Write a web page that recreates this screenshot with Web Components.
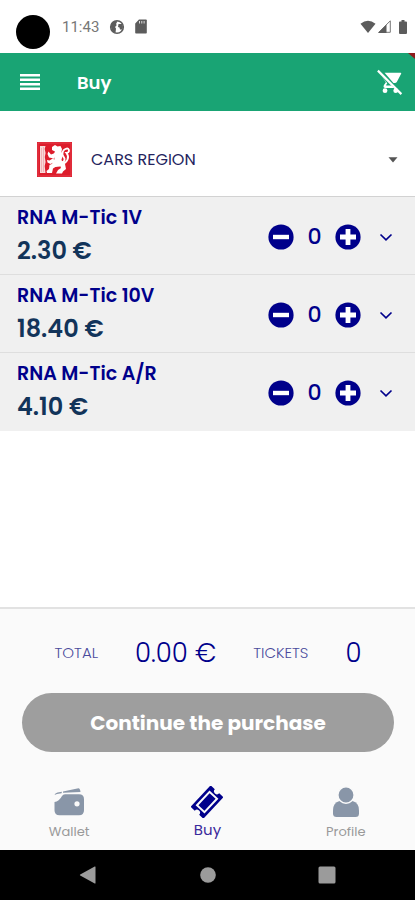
<!DOCTYPE html>
<html lang="en">
<head>
<meta charset="utf-8">
<meta name="viewport" content="width=device-width, initial-scale=1">
<title>Buy</title>
<style>
    :root {
        --brand: #19a474;
        --navy: #00008b;
        --ink: #12345a;
        --muted: #8996a8;
        --line: #dedede;
    }
    body {
        margin: 0;
        font-family: Poppins, Inter, "Open Sans", sans-serif;
        background: #fff;
    }
</style>
</head>
<body>
<buy-screen></buy-screen>

<script>
class StatusBar extends HTMLElement {
    constructor() {
        super();
        this.attachShadow({ mode: 'open' });
    }

    connectedCallback() {
        this.shadowRoot.innerHTML = `
        <style>
            :host {
                display: flex;
                align-items: center;
                gap: 12px;
                height: 53px;
                padding: 0 8px 0 16px;
                box-sizing: border-box;
                background: #fff;
                color: #777;
                font: 15px/20px Roboto, sans-serif;
            }
            .camera {
                width: 34px;
                height: 34px;
                margin-top: 11px;
                border-radius: 50%;
                background: #000;
            }
            .left { display: flex; align-items: center; gap: 10px; flex: 1; }
            .right { display: flex; align-items: center; gap: 2px; }
            .battery { margin-left: 6px; }
            svg { display: block; fill: #5c5c5c; }
        </style>
        <span class="camera"></span>
        <div class="left">
            <time>11:43</time>
            <svg width="16" height="16" viewBox="0 0 16 16">
                <circle cx="8" cy="8" r="6.3" fill="none" stroke="#5c5c5c" stroke-width="1.6"/>
                <path d="M2 8Q1.500 3.500 6 2l2.500.2-1.300 2.300.3 2-1.500 1.500L7 9.500 6.500 14 3.500 12.500z"/>
                <path d="M9.500 5h3.500l1 3-.8 2.500h-2.200L10.500 8.500 9 8z"/>
            </svg>
            <svg width="12" height="15" viewBox="0 0 12 15">
                <path d="M4 .5h7q.8 0 .8.8v12.400q0 .8-.8.8H1q-.8 0-.8-.8V4.500z"/>
                <path d="M4.500 2v2.500M6.800 2v2.500M9.100 2v2.500" stroke="#ddd" stroke-width="1"/>
            </svg>
        </div>
        <div class="right">
            <svg width="16" height="13" viewBox="0 0 16 13">
                <path d="M8 13L.5 3.800Q8-2.500 15.500 3.800z"/>
            </svg>
            <svg width="13" height="13" viewBox="0 0 13 13">
                <path d="M12.300.8v11.500H.8z" fill="#fff" stroke="#777" stroke-width="1"/>
                <path d="M8.500 4.500V13H0z"/>
            </svg>
            <svg class="battery" width="8" height="14" viewBox="0 0 8 14">
                <path d="M2.500 0h3v1.500H7q1 0 1 1V13q0 1-1 1H1q-1 0-1-1V2.500q0-1 1-1h1.500z"/>
            </svg>
        </div>
        `;
    }
}

class AppHeader extends HTMLElement {
    constructor() {
        super();
        this.attachShadow({ mode: 'open' });
    }

    connectedCallback() {
        this.shadowRoot.innerHTML = `
        <style>
            :host {
                display: flex;
                align-items: center;
                position: relative;
                overflow: hidden;
                height: 58px;
                padding: 0 12px 0 20px;
                background: var(--brand);
                color: #fff;
            }
            h1 {
                flex: 1;
                margin: 0 0 0 37px;
                padding-top: 2px;
                font-size: 18px;
                line-height: 24px;
                font-weight: 600;
            }
            button {
                padding: 0;
                border: 0;
                background: none;
                color: inherit;
                cursor: pointer;
            }
            svg { display: block; fill: currentColor; }
            /* debug ribbon peeking in at the corner */
            .ribbon {
                position: absolute;
                top: 0;
                right: 0;
                width: 7px;
                height: 6px;
                background: #8e1c1c;
                clip-path: polygon(0 0, 100% 0, 100% 100%);
            }
        </style>
        <button aria-label="Menu">
            <svg width="20" height="16" viewBox="0 0 20 16"><path d="M0 0h20v2.600H0zM0 4.400h20V7H0zM0 9h20v2.600H0zM0 13.400h20V16H0z"/></svg>
        </button>
        <h1><slot></slot></h1>
        <button aria-label="Empty cart">
            <svg width="26" height="26" viewBox="0 0 24 24">
                <path d="M7 3.400h14.700q1 0 .6 1l-3.900 7.400q-.6 1.200-2 1.200h-1.200zM4.700 7.200l3.500 5-1.900 2.900q-.9 2.400 1.400 2.400h8l-2.300-2.300H8.600l-.2-.5 1.100-1.500z"/>
                <circle cx="7.400" cy="20" r="2.200"/>
                <circle cx="17.300" cy="20" r="2.200"/>
                <path d="M.8 1.500l21.700 21.700" stroke="currentColor" stroke-width="2"/>
            </svg>
        </button>
        <span class="ribbon"></span>
        `;
    }
}

class NetworkPicker extends HTMLElement {
    constructor() {
        super();
        this.attachShadow({ mode: 'open' });
    }

    connectedCallback() {
        this.shadowRoot.innerHTML = `
        <style>
            :host {
                display: flex;
                align-items: center;
                gap: 19px;
                height: 86px;
                padding: 12px 16px 0 37px;
                box-sizing: border-box;
                border-bottom: 1px solid #d2d2d2;
            }
            svg { display: block; flex: none; }
            .field { display: grid; flex: 1; align-items: center; }
            .field > * { grid-area: 1 / 1; }
            select {
                appearance: none;
                width: 100%;
                height: 48px;
                padding: 0;
                border: 0;
                background: none;
                color: #24245e;
                font: 400 16px/24px Poppins, Inter, sans-serif;
            }
            .arrow { justify-self: end; pointer-events: none; }
        </style>
        <svg width="35" height="35" viewBox="0 0 35 35">
            <rect width="35" height="35" fill="#dd1c2b"/>
            <rect x="1" y="1" width="33" height="33" fill="none" stroke="#e85560" stroke-width=".6"/>
            <path d="M3 4h5.500l-.8 3 .9 4-.8 4 .8 5-.9 4 .8 7H3z" fill="#f8dada"/>
            <path d="M4.500 6v24M6.500 5v25" stroke="#eb8b92" stroke-width=".5"/>
            <g fill="#fff">
                <path d="M15 5l3-2 2.500 1.500 3-.5 1.500 3-.5 3 1.500 3-1.500 4.500 1 3.500-2.500 3.500-5 .5-3-3 2.500-5-1-4.500 1.500-3-3-1.500z"/>
                <path d="M18 11l-4 1.500-2.500-3-1 2.500 1.500 3.500 5 1zM16.500 16l-4 2.500-2.500-.5.5 2.500 3 1.500 4-2z"/>
                <path d="M17 21l-4.500 2-.5 4-2.500 2 .5 2h5l1-4.500 4-2.500zM20 21l3 2.500 1 2.500-3 2-2 3.500h6l1-2 3-2.500-1-5-3-3z"/>
            </g>
            <path d="M23.500 20.500q4.500 0 4-4l-2-3.500q-.5-4.500 3-6t3.500 2q-.5 2-2.500 2 2.500 3 1 6.500t-4 4" fill="none" stroke="#fff" stroke-width="1.900"/>
        </svg>
        <div class="field">
            <select aria-label="Network"><option>CARS REGION</option></select>
            <svg class="arrow" width="12" height="6" viewBox="0 0 12 6"><path d="M1.500.3h9L6 5.500z" fill="#555"/></svg>
        </div>
        `;
    }
}

class TicketRow extends HTMLElement {
    constructor() {
        super();
        this.attachShadow({ mode: 'open' });
        this.quantity = 0;
    }

    get price() {
        return Number(this.getAttribute('price'));
    }

    connectedCallback() {
        this.render();
        this.output = this.shadowRoot.querySelector('output');
        this.shadowRoot.querySelector('.minus').addEventListener('click', () => this.change(-1));
        this.shadowRoot.querySelector('.plus').addEventListener('click', () => this.change(1));
    }

    change(step) {
        this.quantity = Math.max(0, this.quantity + step);
        this.output.textContent = this.quantity;
        this.dispatchEvent(new CustomEvent('quantity-change', { bubbles: true }));
    }

    render() {
        this.shadowRoot.innerHTML = `
        <style>
            :host {
                display: flex;
                align-items: center;
                justify-content: space-between;
                height: 78px;
                padding: 2px 21px 0 17px;
                box-sizing: border-box;
                border-bottom: 1px solid var(--line);
                background: #f0f0f0;
                color: var(--navy);
            }
            :host(:last-of-type) { border-bottom-color: #f0f0f0; }
            h2, p { margin: 0; font-weight: 600; }
            h2 { font-size: 19px; line-height: 28px; }
            p { font-size: 24px; line-height: 38px; color: var(--ink); }
            .controls { display: flex; align-items: center; }
            button {
                padding: 0;
                border: 0;
                background: none;
                color: inherit;
                cursor: pointer;
            }
            output {
                width: 41px;
                text-align: center;
                font-size: 22px;
                line-height: 28px;
                font-weight: 500;
            }
            .details { margin-left: 17px; }
            svg { display: block; }
        </style>
        <div>
            <h2><slot></slot></h2>
            <p>${this.price.toFixed(2)} €</p>
        </div>
        <div class="controls">
            <button class="minus" aria-label="Remove one">
                <svg width="26" height="26" viewBox="0 0 26 26"><circle cx="13" cy="13" r="12.600" fill="currentColor"/><path d="M5 13h16" stroke="#fff" stroke-width="4.400"/></svg>
            </button>
            <output>0</output>
            <button class="plus" aria-label="Add one">
                <svg width="26" height="26" viewBox="0 0 26 26"><circle cx="13" cy="13" r="12.600" fill="currentColor"/><path d="M5 13h16M13 5v16" stroke="#fff" stroke-width="4.800"/></svg>
            </button>
            <button class="details" aria-label="Details">
                <svg width="16" height="16" viewBox="0 0 16 16"><path d="M2.500 5.500L8 10.800l5.500-5.300" fill="none" stroke="currentColor" stroke-width="1.700"/></svg>
            </button>
        </div>
        `;
    }
}

class CartSummary extends HTMLElement {
    constructor() {
        super();
        this.attachShadow({ mode: 'open' });
    }

    connectedCallback() {
        this.shadowRoot.innerHTML = `
        <style>
            :host {
                display: block;
                padding: 26px 21px 0 22px;
                border-top: 2px solid #e2e2e2;
                color: var(--navy);
            }
            dl {
                display: flex;
                align-items: center;
                justify-content: center;
                gap: 37px;
                margin: 0 0 22px;
            }
            dt { font-size: 15px; line-height: 36px; font-weight: 300; color: #4a4a9c; }
            dd { margin: 0; font-size: 26px; line-height: 36px; font-weight: 300; }
            button {
                display: block;
                width: 100%;
                height: 59px;
                border: 0;
                border-radius: 30px;
                background: #9e9e9e;
                color: #fff;
                font: inherit;
                font-size: 20px;
                font-weight: 700;
            }
        </style>
        <dl>
            <dt>TOTAL</dt><dd class="total">0.00 €</dd>
            <dt>TICKETS</dt><dd class="count">0</dd>
        </dl>
        <button><slot></slot></button>
        `;
    }

    update(total, count) {
        this.shadowRoot.querySelector('.total').textContent = `${total.toFixed(2)} €`;
        this.shadowRoot.querySelector('.count').textContent = count;
    }
}

class TabLink extends HTMLElement {
    constructor() {
        super();
        this.attachShadow({ mode: 'open' });
    }

    connectedCallback() {
        this.shadowRoot.innerHTML = `
        <style>
            :host { display: block; flex: 1; color: var(--muted); }
            a {
                display: flex;
                flex-direction: column;
                align-items: center;
                gap: 4px;
                color: inherit;
                text-decoration: none;
                font-size: 13px;
                line-height: 20px;
            }
            span { color: #999; }
            :host([active]) { color: var(--navy); }
            :host([active]) a { font-size: 15px; gap: 2px; }
            :host([active]) span { color: #3a2a9c; }
        </style>
        <a href="#${this.getAttribute('to')}">
            <slot name="icon"></slot>
            <span><slot></slot></span>
        </a>
        `;
    }
}

class SystemNav extends HTMLElement {
    constructor() {
        super();
        this.attachShadow({ mode: 'open' });
    }

    connectedCallback() {
        this.shadowRoot.innerHTML = `
        <style>
            :host {
                display: flex;
                height: 50px;
                padding: 0 28px;
                background: #000;
            }
            button {
                display: grid;
                place-items: center;
                flex: 1;
                padding: 0;
                border: 0;
                background: none;
            }
            svg { fill: #9b9b9b; }
        </style>
        <button aria-label="Back"><svg width="18" height="18" viewBox="0 0 18 18"><path d="M16.500 1v16q0 .8-.8.4L1.200 9.500q-.8-.5 0-1L15.700.6q.8-.4.8.4z"/></svg></button>
        <button aria-label="Home"><svg width="18" height="18" viewBox="0 0 18 18"><circle cx="9" cy="9" r="7.800"/></svg></button>
        <button aria-label="Recents"><svg width="18" height="18" viewBox="0 0 18 18"><rect x=".5" y=".5" width="17" height="17" rx="1.500"/></svg></button>
        `;
    }
}

class BuyScreen extends HTMLElement {
    constructor() {
        super();
        this.attachShadow({ mode: 'open' });
    }

    connectedCallback() {
        this.render();
        this.shadowRoot.addEventListener('quantity-change', () => this.updateTotals());
    }

    updateTotals() {
        const rows = [...this.shadowRoot.querySelectorAll('ticket-row')];
        const total = rows.reduce((sum, row) => sum + row.price * row.quantity, 0);
        const count = rows.reduce((sum, row) => sum + row.quantity, 0);
        this.shadowRoot.querySelector('cart-summary').update(total, count);
    }

    render() {
        this.shadowRoot.innerHTML = `
        <style>
            :host {
                display: flex;
                flex-direction: column;
                min-height: 100vh;
            }
            main { flex: 1; }
            footer { background: #fafafa; }
            nav { display: flex; padding: 34px 0 8px; }
            nav svg { display: block; fill: currentColor; }
        </style>
        <status-bar></status-bar>
        <app-header>Buy</app-header>
        <main>
            <network-picker></network-picker>
            <ticket-row price="2.30">RNA M-Tic 1V</ticket-row>
            <ticket-row price="18.40">RNA M-Tic 10V</ticket-row>
            <ticket-row price="4.10">RNA M-Tic A/R</ticket-row>
        </main>
        <footer>
            <cart-summary>Continue the purchase</cart-summary>
            <nav>
                <tab-link to="wallet">
                    <svg slot="icon" width="32" height="32" viewBox="0 0 32 32">
                        <path d="M1.500 16q4.500-.5 7.500-6 1-1.800 3-1.800h14q5 0 5 5v11q0 5-5 5H6.500q-5 0-5-5z"/>
                        <path d="M10 5.500L25.500 2.300q1.500 0 2 3.700L10 6.800zM1.500 9q.5-2 3-2.500l4.500-.8-.5 1.500-4.500.8z"/>
                        <circle cx="24" cy="17.800" r="2.600" fill="#fafafa"/>
                    </svg>
                    Wallet
                </tab-link>
                <tab-link to="buy" active>
                    <svg slot="icon" width="32" height="32" viewBox="0 0 32 32">
                        <g transform="rotate(-47 16 16)">
                            <path d="M2.300 7.300h27.400q1 0 1 1v4.700a3 3 0 0 0 0 6v4.700q0 1-1 1H2.300q-1 0-1-1V19a3 3 0 0 0 0-6V8.300q0-1 1-1z"/>
                            <rect x="6.800" y="10.900" width="18.400" height="10.200" fill="none" stroke="#fafafa" stroke-width="2"/>
                        </g>
                    </svg>
                    Buy
                </tab-link>
                <tab-link to="profile">
                    <svg slot="icon" width="32" height="32" viewBox="0 0 32 32">
                        <path d="M9.500 15h13q6.500 1.500 6.500 9.500v3q0 3.500-3.500 3.500h-19Q3 31 3 27.500v-3Q3 16.500 9.500 15z"/>
                        <circle cx="16" cy="9" r="8.200" stroke="#fafafa" stroke-width="1.600"/>
                    </svg>
                    Profile
                </tab-link>
            </nav>
        </footer>
        <system-nav></system-nav>
        `;
    }
}

customElements.define('status-bar', StatusBar);
customElements.define('app-header', AppHeader);
customElements.define('network-picker', NetworkPicker);
customElements.define('ticket-row', TicketRow);
customElements.define('cart-summary', CartSummary);
customElements.define('tab-link', TabLink);
customElements.define('system-nav', SystemNav);
customElements.define('buy-screen', BuyScreen);
</script>
</body>
</html>
